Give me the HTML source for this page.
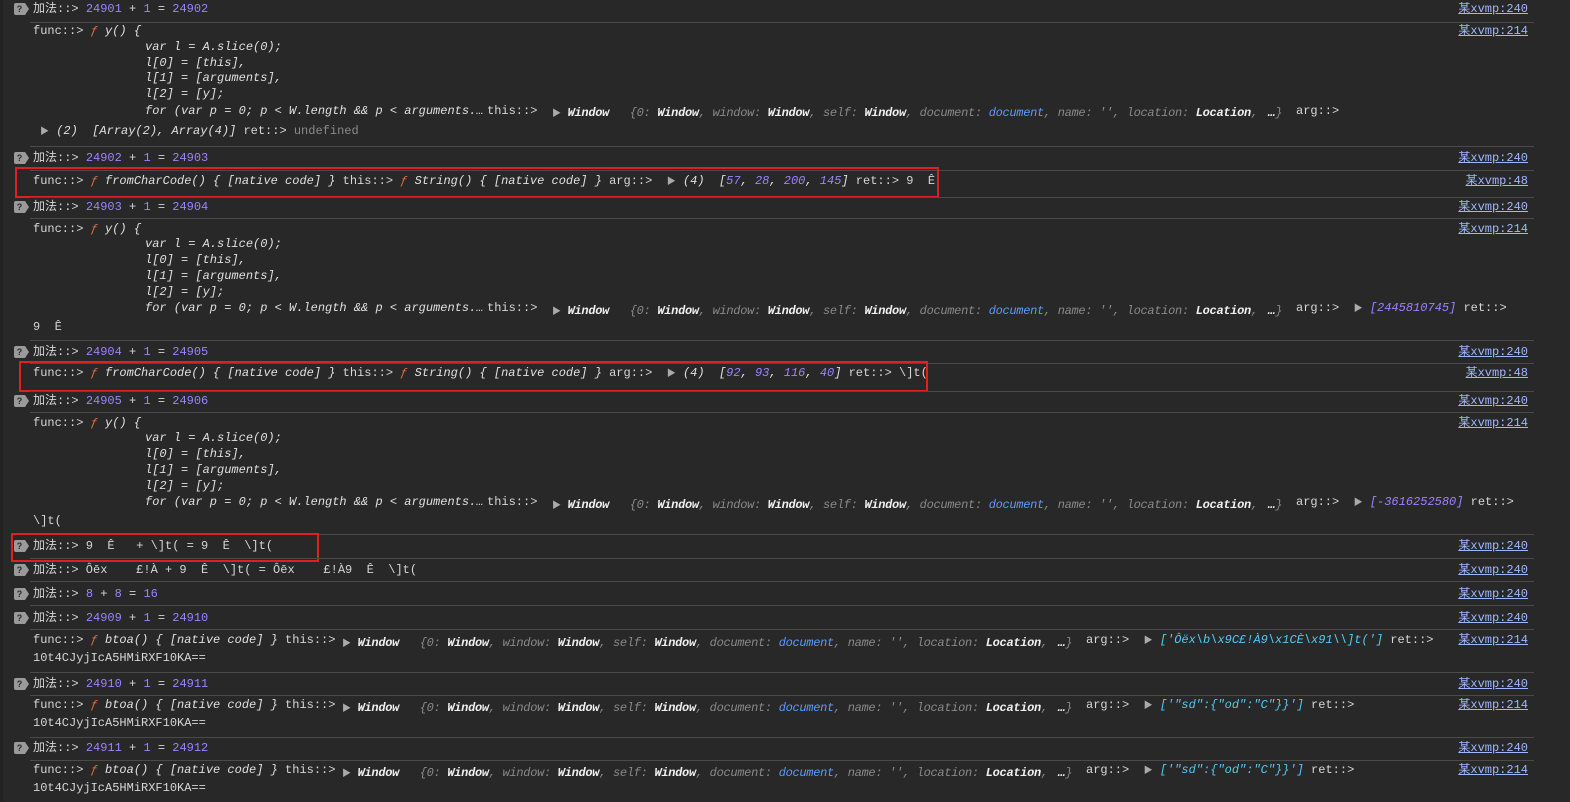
<!DOCTYPE html>
<html><head><meta charset="utf-8"><style>
body{margin:0;width:1570px;height:802px;background:#282828;overflow:hidden;position:relative;font-family:"Liberation Mono","Noto Sans CJK SC",monospace}
.t{position:absolute;white-space:pre;font-size:12px;line-height:14px;color:#d6d6d6}
.i{font-style:italic;color:#e0e0e0}
.n{color:#9b84ff}
.f{color:#e2703a;font-style:italic}
.g{color:#8a8a8a;font-style:italic}
.b{color:#5b9bff;font-style:italic}
.w{color:#f0f0f0;font-style:italic;font-weight:bold}
.c{color:#56c8f5;font-style:italic}
.u{color:#8a8a8a}
.o{letter-spacing:-0.3px}
.l{position:absolute;right:42px;color:#9fb7ff;text-decoration:underline;font-size:12px;line-height:14px;white-space:pre}
.s{position:absolute;left:30px;width:1504px;height:1px;background:#4a4a4a}
.q{position:absolute;left:14px;width:11px;height:12px;background:#9a9a9a;border-radius:2px 0 0 2px;color:#2a2a2a;font:bold 9px/12px "Liberation Sans",sans-serif;text-align:center}
.q:after{content:"";position:absolute;left:11px;top:0;border-left:4px solid #9a9a9a;border-top:6px solid transparent;border-bottom:6px solid transparent}
.r{position:absolute;border:2px solid #e02020}
.tri{color:#aaa;font-size:9px}
</style></head><body>
<div style="position:absolute;left:0;top:0;width:3px;height:802px;background:#222"></div>

<div class="q" style="top:3px">?</div>
<div class="t" style="left:33px;top:2px">加法::> <span class="n">24901</span> + <span class="n">1</span> = <span class="n">24902</span></div>
<div class="l" style="top:2px">某xvmp:240</div>
<div class="s" style="top:22px"></div>
<div class="t" style="left:33px;top:24px">func::> <span class="f">ƒ</span> <span class="i">y() {</span></div>
<div class="t i" style="left:145px;top:40px">var l = A.slice(0);</div>
<div class="t i" style="left:145px;top:56px">l[0] = [this],</div>
<div class="t i" style="left:145px;top:71px">l[1] = [arguments],</div>
<div class="t i" style="left:145px;top:87px">l[2] = [y];</div>
<div class="t i" style="left:145px;top:104px">for (var p = 0; p &lt; W.length &amp;&amp; p &lt; arguments.…</div>
<div class="t" style="left:487px;top:104px">this::></div>
<div class="t o" style="left:552px;top:106px"><span class="tri">▶</span> <span class="w">Window</span>   <span class="g">{0: </span><span class="w">Window</span><span class="g">, window: </span><span class="w">Window</span><span class="g">, self: </span><span class="w">Window</span><span class="g">, document: </span><span class="b">document</span><span class="g">, name: '', location: </span><span class="w">Location</span><span class="g">,</span></div>
<div class="t" style="left:1268px;top:106px"><span class="w">…</span><span class="g">}</span></div>
<div class="t" style="left:1296px;top:104px">arg::></div>
<div class="t" style="left:40px;top:124px"><span class="tri">▶</span> <span class="i">(2)  [Array(2), Array(4)]</span> ret::> <span class="u">undefined</span></div>
<div class="l" style="top:24px">某xvmp:214</div>
<div class="s" style="top:146px"></div>

<div class="q" style="top:152px">?</div>
<div class="t" style="left:33px;top:151px">加法::> <span class="n">24902</span> + <span class="n">1</span> = <span class="n">24903</span></div>
<div class="l" style="top:151px">某xvmp:240</div>
<div class="s" style="top:170px"></div>
<div class="t" style="left:33px;top:174px">func::> <span class="f">ƒ</span> <span class="i">fromCharCode() { [native code] }</span> this::> <span class="f">ƒ</span> <span class="i">String() { [native code] }</span> arg::>  <span class="tri">▶</span> <span class="i">(4)  [<span class="n">57</span>, <span class="n">28</span>, <span class="n">200</span>, <span class="n">145</span>]</span> ret::> 9  Ê</div>
<div class="l" style="top:174px">某xvmp:48</div>
<div class="r" style="left:15px;top:167px;width:920px;height:27px"></div>
<div class="s" style="top:197px"></div>

<div class="q" style="top:201px">?</div>
<div class="t" style="left:33px;top:200px">加法::> <span class="n">24903</span> + <span class="n">1</span> = <span class="n">24904</span></div>
<div class="l" style="top:200px">某xvmp:240</div>
<div class="s" style="top:218px"></div>
<div class="t" style="left:33px;top:222px">func::> <span class="f">ƒ</span> <span class="i">y() {</span></div>
<div class="t i" style="left:145px;top:237px">var l = A.slice(0);</div>
<div class="t i" style="left:145px;top:253px">l[0] = [this],</div>
<div class="t i" style="left:145px;top:269px">l[1] = [arguments],</div>
<div class="t i" style="left:145px;top:285px">l[2] = [y];</div>
<div class="t i" style="left:145px;top:301px">for (var p = 0; p &lt; W.length &amp;&amp; p &lt; arguments.…</div>
<div class="t" style="left:487px;top:301px">this::></div>
<div class="t o" style="left:552px;top:304px"><span class="tri">▶</span> <span class="w">Window</span>   <span class="g">{0: </span><span class="w">Window</span><span class="g">, window: </span><span class="w">Window</span><span class="g">, self: </span><span class="w">Window</span><span class="g">, document: </span><span class="b">document</span><span class="g">, name: '', location: </span><span class="w">Location</span><span class="g">,</span></div>
<div class="t" style="left:1268px;top:304px"><span class="w">…</span><span class="g">}</span></div>
<div class="t" style="left:1296px;top:301px">arg::>  <span class="tri">▶</span> <span class="i n">[2445810745]</span> ret::></div>
<div class="t" style="left:33px;top:320px">9  Ê</div>
<div class="l" style="top:222px">某xvmp:214</div>
<div class="s" style="top:340px"></div>

<div class="q" style="top:346px">?</div>
<div class="t" style="left:33px;top:345px">加法::> <span class="n">24904</span> + <span class="n">1</span> = <span class="n">24905</span></div>
<div class="l" style="top:345px">某xvmp:240</div>
<div class="s" style="top:363px"></div>
<div class="t" style="left:33px;top:366px">func::> <span class="f">ƒ</span> <span class="i">fromCharCode() { [native code] }</span> this::> <span class="f">ƒ</span> <span class="i">String() { [native code] }</span> arg::>  <span class="tri">▶</span> <span class="i">(4)  [<span class="n">92</span>, <span class="n">93</span>, <span class="n">116</span>, <span class="n">40</span>]</span> ret::> \]t(</div>
<div class="l" style="top:366px">某xvmp:48</div>
<div class="r" style="left:19px;top:361px;width:905px;height:27px"></div>
<div class="s" style="top:391px"></div>

<div class="q" style="top:395px">?</div>
<div class="t" style="left:33px;top:394px">加法::> <span class="n">24905</span> + <span class="n">1</span> = <span class="n">24906</span></div>
<div class="l" style="top:394px">某xvmp:240</div>
<div class="s" style="top:412px"></div>
<div class="t" style="left:33px;top:416px">func::> <span class="f">ƒ</span> <span class="i">y() {</span></div>
<div class="t i" style="left:145px;top:431px">var l = A.slice(0);</div>
<div class="t i" style="left:145px;top:447px">l[0] = [this],</div>
<div class="t i" style="left:145px;top:463px">l[1] = [arguments],</div>
<div class="t i" style="left:145px;top:479px">l[2] = [y];</div>
<div class="t i" style="left:145px;top:495px">for (var p = 0; p &lt; W.length &amp;&amp; p &lt; arguments.…</div>
<div class="t" style="left:487px;top:495px">this::></div>
<div class="t o" style="left:552px;top:498px"><span class="tri">▶</span> <span class="w">Window</span>   <span class="g">{0: </span><span class="w">Window</span><span class="g">, window: </span><span class="w">Window</span><span class="g">, self: </span><span class="w">Window</span><span class="g">, document: </span><span class="b">document</span><span class="g">, name: '', location: </span><span class="w">Location</span><span class="g">,</span></div>
<div class="t" style="left:1268px;top:498px"><span class="w">…</span><span class="g">}</span></div>
<div class="t" style="left:1296px;top:495px">arg::>  <span class="tri">▶</span> <span class="i n">[-3616252580]</span> ret::></div>
<div class="t" style="left:33px;top:514px">\]t(</div>
<div class="l" style="top:416px">某xvmp:214</div>
<div class="s" style="top:534px"></div>

<div class="q" style="top:540px">?</div>
<div class="t" style="left:33px;top:539px">加法::> 9  Ê   + \]t( = 9  Ê  \]t(</div>
<div class="r" style="left:11px;top:533px;width:304px;height:25px"></div>
<div class="l" style="top:539px">某xvmp:240</div>
<div class="s" style="top:558px"></div>
<div class="q" style="top:564px">?</div>
<div class="t" style="left:33px;top:563px">加法::> Ôēx    £!À + 9  Ê  \]t( = Ôēx    £!À9  Ê  \]t(</div>
<div class="l" style="top:563px">某xvmp:240</div>
<div class="s" style="top:581px"></div>
<div class="q" style="top:588px">?</div>
<div class="t" style="left:33px;top:587px">加法::> <span class="n">8</span> + <span class="n">8</span> = <span class="n">16</span></div>
<div class="l" style="top:587px">某xvmp:240</div>
<div class="s" style="top:605px"></div>
<div class="q" style="top:612px">?</div>
<div class="t" style="left:33px;top:611px">加法::> <span class="n">24909</span> + <span class="n">1</span> = <span class="n">24910</span></div>
<div class="l" style="top:611px">某xvmp:240</div>
<div class="s" style="top:629px"></div>

<div class="t" style="left:33px;top:633px">func::> <span class="f">ƒ</span> <span class="i">btoa() { [native code] }</span> this::></div>
<div class="t o" style="left:342px;top:636px"><span class="tri">▶</span> <span class="w">Window</span>   <span class="g">{0: </span><span class="w">Window</span><span class="g">, window: </span><span class="w">Window</span><span class="g">, self: </span><span class="w">Window</span><span class="g">, document: </span><span class="b">document</span><span class="g">, name: '', location: </span><span class="w">Location</span><span class="g">,</span></div>
<div class="t" style="left:1058px;top:636px"><span class="w">…</span><span class="g">}</span></div>
<div class="t" style="left:1086px;top:633px">arg::>  <span class="tri">▶</span> <span class="c">['Ôëx\b\x9C£!À9\x1CÈ\x91\\]t(']</span> ret::></div>
<div class="t" style="left:33px;top:651px">10t4CJyjIcA5HMiRXF10KA==</div>
<div class="l" style="top:633px">某xvmp:214</div>
<div class="s" style="top:672px"></div>

<div class="q" style="top:678px">?</div>
<div class="t" style="left:33px;top:677px">加法::> <span class="n">24910</span> + <span class="n">1</span> = <span class="n">24911</span></div>
<div class="l" style="top:677px">某xvmp:240</div>
<div class="s" style="top:695px"></div>
<div class="t" style="left:33px;top:698px">func::> <span class="f">ƒ</span> <span class="i">btoa() { [native code] }</span> this::></div>
<div class="t o" style="left:342px;top:701px"><span class="tri">▶</span> <span class="w">Window</span>   <span class="g">{0: </span><span class="w">Window</span><span class="g">, window: </span><span class="w">Window</span><span class="g">, self: </span><span class="w">Window</span><span class="g">, document: </span><span class="b">document</span><span class="g">, name: '', location: </span><span class="w">Location</span><span class="g">,</span></div>
<div class="t" style="left:1058px;top:701px"><span class="w">…</span><span class="g">}</span></div>
<div class="t" style="left:1086px;top:698px">arg::>  <span class="tri">▶</span> <span class="c">['"sd":{"od":"C"}}']</span> ret::></div>
<div class="t" style="left:33px;top:716px">10t4CJyjIcA5HMiRXF10KA==</div>
<div class="l" style="top:698px">某xvmp:214</div>
<div class="s" style="top:737px"></div>

<div class="q" style="top:742px">?</div>
<div class="t" style="left:33px;top:741px">加法::> <span class="n">24911</span> + <span class="n">1</span> = <span class="n">24912</span></div>
<div class="l" style="top:741px">某xvmp:240</div>
<div class="s" style="top:760px"></div>
<div class="t" style="left:33px;top:763px">func::> <span class="f">ƒ</span> <span class="i">btoa() { [native code] }</span> this::></div>
<div class="t o" style="left:342px;top:766px"><span class="tri">▶</span> <span class="w">Window</span>   <span class="g">{0: </span><span class="w">Window</span><span class="g">, window: </span><span class="w">Window</span><span class="g">, self: </span><span class="w">Window</span><span class="g">, document: </span><span class="b">document</span><span class="g">, name: '', location: </span><span class="w">Location</span><span class="g">,</span></div>
<div class="t" style="left:1058px;top:766px"><span class="w">…</span><span class="g">}</span></div>
<div class="t" style="left:1086px;top:763px">arg::>  <span class="tri">▶</span> <span class="c">['"sd":{"od":"C"}}']</span> ret::></div>
<div class="t" style="left:33px;top:781px">10t4CJyjIcA5HMiRXF10KA==</div>
<div class="l" style="top:763px">某xvmp:214</div>
</body></html>
